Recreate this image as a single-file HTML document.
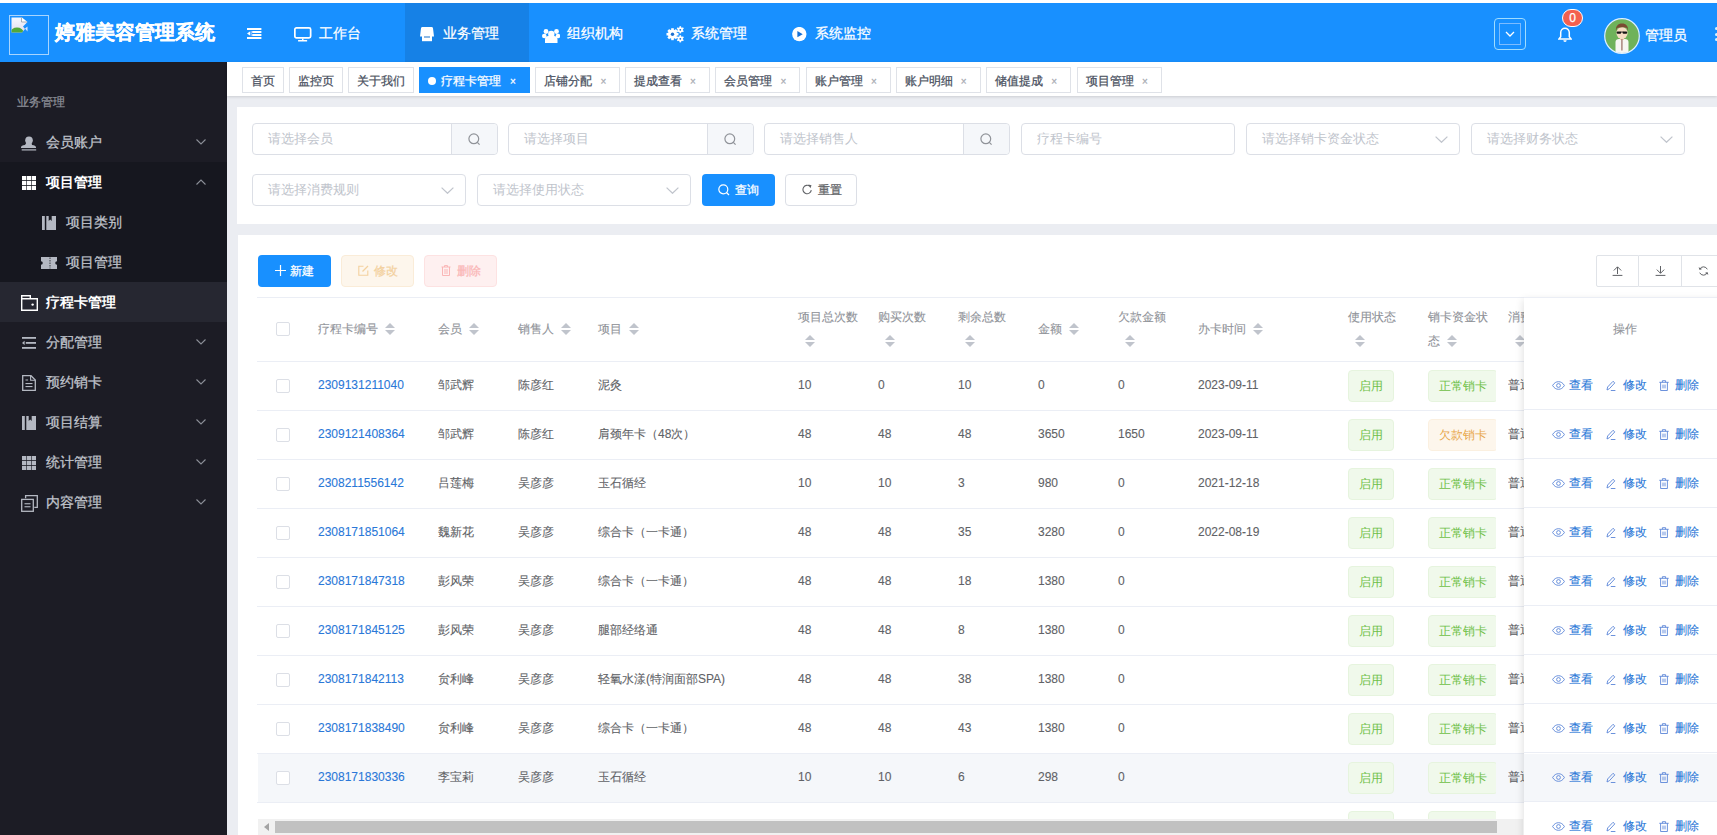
<!DOCTYPE html>
<html><head><meta charset="utf-8">
<style>
*{box-sizing:border-box;margin:0;padding:0}
html,body{width:1717px;height:835px;overflow:hidden;background:#fff;font-family:"Liberation Sans",sans-serif;}
body{-webkit-text-stroke:0.25px currentColor}
.abs{position:absolute}
#hdr{position:absolute;left:0;top:3px;width:1717px;height:59px;background:#1890ff;color:#fff}
#side{position:absolute;left:0;top:62px;width:227px;height:773px;background:#1c1c25}
#main{position:absolute;left:227px;top:62px;width:1490px;height:773px;background:#ebedf2}
#tags{position:absolute;left:0;top:0;width:1490px;height:34px;background:#fff;box-shadow:0 1px 3px 0 rgba(0,0,0,.12),0 0 3px 0 rgba(0,0,0,.04)}
.tag{position:absolute;top:5px;height:26px;border:1px solid #dfe2e8;background:#fff;color:#495060;font-size:12px;line-height:24px;padding-left:9px;white-space:nowrap}
.tag .x{position:absolute;font-size:11px;color:#999}
.nav{top:21px;font-size:14px;line-height:18px;color:#fff;white-space:nowrap}
.sm{font-size:14px;line-height:18px;color:#c0c4cc;white-space:nowrap}

.tag{position:absolute;top:5px;height:26px;border:1px solid #dfe2e8;background:#fff;color:#495060;font-size:12px;line-height:24px;white-space:nowrap}
.tag .tx{position:absolute;top:1px}
.tag .x{position:absolute;top:1.5px;width:16px;text-align:center;font-size:10px;color:#a8abb2}
.tag.tagon{background:#1890ff;border-color:#1890ff;color:#fff}
.tag.tagon .x{color:#fff}
.tag .dot{position:absolute;left:8px;top:9px;width:8px;height:8px;border-radius:50%;background:#fff}
.card{position:absolute;background:#fff}
.inp{-webkit-text-stroke:0;position:absolute;height:32px;border:1px solid #dcdfe6;border-radius:4px;background:#fff;font-size:13px;color:#c0c4cc;line-height:30px;padding-left:15px;white-space:nowrap}
.inp .ap{position:absolute;right:0;top:0;width:46px;height:30px;background:#f5f7fa;border-left:1px solid #dcdfe6;border-radius:0 4px 4px 0}
.inp .ap svg{position:absolute;left:16px;top:9px}
.inp .arr{position:absolute;right:11px;top:12px}
.btn{position:absolute;height:32px;border-radius:4px;font-size:12px;line-height:30px;white-space:nowrap}

.tb{position:absolute;white-space:nowrap}
.tb>svg,.abs>svg{display:block}
.th{-webkit-text-stroke:0.1px currentColor;position:absolute;font-size:12px;line-height:24px;color:#909399;white-space:nowrap}
.td{-webkit-text-stroke:0.1px currentColor;position:absolute;font-size:12px;line-height:16px;color:#606266;white-space:nowrap}
.lk{color:#2a78d8}
.cb{position:absolute;width:14px;height:14px;border:1px solid #dcdfe6;border-radius:2px;background:#fff}
.st{-webkit-text-stroke:0;position:absolute;height:32px;padding:0 10px;border:1px solid;border-radius:4px;font-size:12px;line-height:30px;white-space:nowrap}
.ok{background:#f0f9eb;border-color:#e6f4de;color:#6ec046}
.wn{background:#fdf6ec;border-color:#fbf0e0;color:#e8a74a}
.hl{position:absolute;height:1px;background:#ebeef5}
.act{-webkit-text-stroke:0.1px currentColor;position:absolute;font-size:12px;line-height:16px;color:#2a78d8;white-space:nowrap}
</style></head><body>
<div id="hdr">
  <div class="abs" style="left:9px;top:12px;width:40px;height:40px;border:1px solid #a8d5ff"></div>
  <svg class="abs" style="left:11px;top:14px" width="18" height="16" viewBox="0 0 18 16">
    <defs><clipPath id="bi"><path d="M.5 .5h10.5l5.5 4.5-4.5 4.5 2 2.5-3 3.5h-10.5z"/></clipPath>
    <linearGradient id="bg1" x1="0" y1="0" x2="0" y2="1"><stop offset="0" stop-color="#f4f8ff"/><stop offset="1" stop-color="#e2dcef"/></linearGradient></defs>
    <path d="M.5 .5h10.5l5.5 4.5-4.5 4.5 2 2.5-3 3.5h-10.5z" fill="url(#bg1)"/>
    <path d="M10.5 .5v4.5h5.5" fill="#fff" stroke="#8a8f99" stroke-width=".7"/>
    <g clip-path="url(#bi)"><ellipse cx="6" cy="15.5" rx="6.5" ry="5" fill="#52a83a"/></g>
    <path d="M14 11.5l2.5-2v5z" fill="#d8e6ff"/>
  </svg>
  <div class="abs" style="left:55px;top:16px;font-size:20px;font-weight:bold;line-height:26px;letter-spacing:0px">婷雅美容管理系统</div>
  <svg class="abs" style="left:247px;top:25px" width="15" height="11" viewBox="0 0 15 11">
    <rect x="0" y="0" width="14.4" height="2" fill="#fff"/>
    <rect x="5.2" y="3" width="9.2" height="2" fill="#fff"/>
    <rect x="5.2" y="6" width="9.2" height="2" fill="#fff"/>
    <rect x="0" y="9" width="14.4" height="2" fill="#fff"/>
    <path d="M0 5.5L3.3 3.2v4.6z" fill="#fff"/><rect x="4" y="3" width="0.6" height="5" fill="#c8d0ff"/>
  </svg>
  <div class="abs" style="left:405px;top:0;width:124px;height:59px;background:#1681e6"></div>
  <svg class="abs" style="left:294px;top:24px" width="18" height="15" viewBox="0 0 18 15">
    <rect x="0.85" y="0.85" width="15.8" height="10" rx="1.6" fill="none" stroke="#fff" stroke-width="1.7"/>
    <rect x="8" y="11.5" width="1.5" height="1.6" fill="#fff"/><rect x="4" y="13" width="9.2" height="1.5" rx=".5" fill="#fff"/>
  </svg>
  <div class="abs nav" style="left:319px">工作台</div>
  <svg class="abs" style="left:420px;top:24px" width="14" height="15" viewBox="0 0 14 15">
    <path d="M2.5 0h9a1.5 1.5 0 0 1 1.5 1.3l1 8.2h-14l1-8.2a1.5 1.5 0 0 1 1.5-1.3z" fill="#fff"/>
    <rect x="2" y="9" width="10" height="5.2" fill="#fff"/>
    <rect x="4" y="9.5" width="6" height="1" fill="#1a73c9"/>
  </svg>
  <div class="abs nav" style="left:443px">业务管理</div>
  <svg class="abs" style="left:542px;top:23px" width="18" height="17" viewBox="0 0 18 17">
    <g fill="#fff">
    <circle cx="4" cy="5.5" r="2.4"/><circle cx="14.5" cy="5.5" r="2.4"/>
    <circle cx="2.3" cy="10" r="2.3"/><circle cx="16" cy="10" r="2.3"/>
    <circle cx="9.3" cy="8" r="3.2"/>
    <path d="M3 17v-3.5a3.5 3.5 0 0 1 3.5-3.5h5.5a3.5 3.5 0 0 1 3.5 3.5v3.5z"/>
    </g>
  </svg>
  <div class="abs nav" style="left:567px">组织机构</div>
  <svg class="abs" style="left:666px;top:23px" width="19" height="17" viewBox="0 0 19 17">
    <g fill="#fff">
    <circle cx="6.5" cy="8.2" r="4.6"/>
    <g transform="translate(6.5 8.2)"><rect x="-1.3" y="-6" width="2.6" height="12"/><rect x="-1.3" y="-6" width="2.6" height="12" transform="rotate(45)"/><rect x="-1.3" y="-6" width="2.6" height="12" transform="rotate(90)"/><rect x="-1.3" y="-6" width="2.6" height="12" transform="rotate(135)"/></g>
    <circle cx="14.3" cy="3.8" r="2.6"/>
    <g transform="translate(14.3 3.8)"><rect x="-.8" y="-3.6" width="1.6" height="7.2"/><rect x="-.8" y="-3.6" width="1.6" height="7.2" transform="rotate(60)"/><rect x="-.8" y="-3.6" width="1.6" height="7.2" transform="rotate(120)"/></g>
    <circle cx="14.3" cy="12.8" r="2.6"/>
    <g transform="translate(14.3 12.8)"><rect x="-.8" y="-3.6" width="1.6" height="7.2"/><rect x="-.8" y="-3.6" width="1.6" height="7.2" transform="rotate(60)"/><rect x="-.8" y="-3.6" width="1.6" height="7.2" transform="rotate(120)"/></g>
    </g>
    <circle cx="6.5" cy="8.2" r="1.7" fill="#1b6fd0"/>
    <circle cx="14.3" cy="3.8" r=".9" fill="#1b6fd0"/>
    <circle cx="14.3" cy="12.8" r=".9" fill="#1b6fd0"/>
  </svg>
  <div class="abs nav" style="left:691px">系统管理</div>
  <svg class="abs" style="left:792px;top:24px" width="15" height="15" viewBox="0 0 15 15">
    <circle cx="7.3" cy="7.1" r="7.2" fill="#fff"/><path d="M5.4 4v6.3l5.3-3.15z" fill="#1670d6"/>
  </svg>
  <div class="abs nav" style="left:815px">系统监控</div>

  <div class="abs" style="left:1494px;top:15px;width:32px;height:32px;border:1.5px solid #9fdcff;border-radius:4px"></div>
  <div class="abs" style="left:1499px;top:20px;width:22px;height:22px;border:1px solid #7dbcff"></div>
  <svg class="abs" style="left:1505px;top:28px" width="10" height="6" viewBox="0 0 10 6"><path d="M1 1l4 4 4-4" fill="none" stroke="#fff" stroke-width="1.3"/></svg>
  <svg class="abs" style="left:1558px;top:24px" width="14" height="15" viewBox="0 0 14 15">
    <path d="M7 1.2a4.3 4.3 0 0 1 4.3 4.3v4.2l1.8 2.3H0.9l1.8-2.3V5.5A4.3 4.3 0 0 1 7 1.2z" fill="none" stroke="#fff" stroke-width="1.5"/>
    <path d="M5.3 13.2a1.7 1.7 0 0 0 3.4 0z" fill="#fff"/>
  </svg>
  <div class="abs" style="left:1562px;top:6px;width:21px;height:18px;border-radius:9px;background:#f3604f;border:1px solid #fff;color:#fff;font-size:12px;line-height:16px;text-align:center">0</div>
  <svg class="abs" style="left:1604px;top:15px" width="36" height="36" viewBox="0 0 36 36">
    <defs><clipPath id="av"><circle cx="18" cy="18" r="17"/></clipPath></defs>
    <g clip-path="url(#av)">
      <rect width="36" height="36" fill="#6fb25a"/>
      <path d="M11.5 36v-12c0-2 1.5-3 3.5-3h6c2 0 3.5 1 3.5 3v12z" fill="#f6f6f2"/>
      <rect x="16" y="19" width="4" height="3" fill="#f1d3b8"/>
      <rect x="17.2" y="21" width="1.4" height="11.5" fill="#a37d74"/>
      <ellipse cx="18" cy="15" rx="5.6" ry="6" fill="#f6dcc3"/>
      <path d="M12 13c-.5-5 2-7.5 6-7.5s6.5 2.5 6 7.5l-1-3c-2-1-7-1-10 0z" fill="#7a4a32"/>
      <rect x="12.6" y="13.4" width="4.6" height="2.4" rx="1" fill="#151515"/><rect x="18.6" y="13.4" width="4.6" height="2.4" rx="1" fill="#151515"/><rect x="16.5" y="13.6" width="3" height=".8" fill="#151515"/>
    </g>
    <circle cx="18" cy="18" r="17.3" fill="none" stroke="#dff0ff" stroke-width="1.2"/>
  </svg>
  <div class="abs nav" style="left:1645px;top:23px">管理员</div>
  <div class="abs" style="left:1715px;top:23.5px;width:3px;height:3px;background:#d8f4ff;border-radius:2px"></div><div class="abs" style="left:1715px;top:29.5px;width:3px;height:3px;background:#d8f4ff;border-radius:2px"></div><div class="abs" style="left:1715px;top:35px;width:3px;height:3px;background:#d8f4ff;border-radius:2px"></div>
  
</div>
<div id="side">
  <div class="abs" style="left:0;top:100px;width:227px;height:120px;background:#16171f"></div>
  <div class="abs" style="left:0;top:220px;width:227px;height:40px;background:#262731"></div>
  <div class="abs" style="left:17px;top:33px;font-size:12px;line-height:15px;color:#8c8f98">业务管理</div>
  <!-- 会员账户 y 60 -->
  <svg class="abs" style="left:21px;top:74px" width="16" height="15" viewBox="0 0 16 15">
    <circle cx="8" cy="4.3" r="3.8" fill="#b4b8c2"/><path d="M5.5 6.5h5l.5 2.5c2.5.3 4 .9 4 2.3v.8h-15v-.8c0-1.4 1.5-2 4-2.3z" fill="#b4b8c2"/>
    <rect x="0.7" y="13.3" width="14.5" height="1.2" fill="#b4b8c2"/>
  </svg>
  <div class="abs sm" style="left:46px;top:71px">会员账户</div>
  <svg class="abs chev" style="left:196px;top:77px" width="10" height="6" viewBox="0 0 10 6"><path d="M.5 .5l4.5 4.5 4.5-4.5" fill="none" stroke="#8c8f98" stroke-width="1.1"/></svg>
  <!-- 项目管理 y 100 -->
  <svg class="abs" style="left:22px;top:114px" width="14" height="14" viewBox="0 0 14 14">
    <g fill="#fff"><rect x="0" y="0" width="4.3" height="4" /><rect x="4.9" y="0" width="4.3" height="4"/><rect x="9.8" y="0" width="4.2" height="4"/>
    <rect x="0" y="4.8" width="4.3" height="4.2"/><rect x="4.9" y="4.8" width="4.3" height="4.2"/><rect x="9.8" y="4.8" width="4.2" height="4.2"/>
    <rect x="0" y="9.8" width="4.3" height="4.2"/><rect x="4.9" y="9.8" width="4.3" height="4.2"/><rect x="9.8" y="9.8" width="4.2" height="4.2"/></g>
  </svg>
  <div class="abs sm" style="left:46px;top:111px;color:#fff;font-weight:bold;-webkit-text-stroke:0">项目管理</div>
  <svg class="abs chev" style="left:196px;top:117px" width="10" height="6" viewBox="0 0 10 6"><path d="M.5 5.5l4.5-4.5 4.5 4.5" fill="none" stroke="#8c8f98" stroke-width="1.1"/></svg>
  <!-- 项目类别 y 140 -->
  <svg class="abs" style="left:42px;top:154px" width="14" height="14" viewBox="0 0 14 14">
    <rect x="0" y="0" width="2.8" height="14" fill="#b4b8c2"/>
    <path d="M4.3 0h2.4v5l1.5-1.4 1.5 1.4v-5h4.3v14h-9.7z" fill="#b4b8c2"/>
  </svg>
  <div class="abs sm" style="left:66px;top:151px">项目类别</div>
  <!-- 项目管理 sub y 180 -->
  <svg class="abs" style="left:41px;top:195px" width="16" height="12" viewBox="0 0 16 12">
    <path d="M0 0h16v4.2a1.8 1.8 0 0 0 0 3.6v4.2h-16v-4.2a1.8 1.8 0 0 0 0-3.6z" fill="#b4b8c2"/>
    <path d="M9 0.5v11" stroke="#181921" stroke-width=".8" stroke-dasharray="1.5 1"/>
  </svg>
  <div class="abs sm" style="left:66px;top:191px">项目管理</div>
  <!-- 疗程卡管理 y 220 -->
  <svg class="abs" style="left:21px;top:233px" width="17" height="16" viewBox="0 0 17 16">
    <path d="M.7 3.7h15.6v11.6h-15.6z" fill="none" stroke="#fff" stroke-width="1.4"/>
    <path d="M.7 3.7v-3h8.6v3" fill="none" stroke="#fff" stroke-width="1.4"/>
    <circle cx="11.6" cy="9.6" r="1.2" fill="#fff"/>
  </svg>
  <div class="abs sm" style="left:46px;top:231px;color:#fff;font-weight:bold;-webkit-text-stroke:0">疗程卡管理</div>
  <!-- 分配管理 y 260 -->
  <svg class="abs" style="left:22px;top:275px" width="14" height="12" viewBox="0 0 14 12">
    <rect x="0" y="0" width="14" height="1.8" fill="#b4b8c2"/><rect x="3.8" y="5" width="10.2" height="1.8" fill="#b4b8c2"/><rect x="0" y="10" width="14" height="1.8" fill="#b4b8c2"/>
    <path d="M0 5.9l2.6-2.2v4.4z" fill="#b4b8c2"/>
  </svg>
  <div class="abs sm" style="left:46px;top:271px">分配管理</div>
  <svg class="abs chev" style="left:196px;top:277px" width="10" height="6" viewBox="0 0 10 6"><path d="M.5 .5l4.5 4.5 4.5-4.5" fill="none" stroke="#8c8f98" stroke-width="1.1"/></svg>
  <!-- 预约销卡 y 300 -->
  <svg class="abs" style="left:22px;top:313px" width="14" height="16" viewBox="0 0 14 16">
    <path d="M.7 .7h8.3l4.3 4.3v10.3h-12.6z" fill="none" stroke="#b4b8c2" stroke-width="1.3"/>
    <path d="M8.6 .7v4.6h4.6" fill="none" stroke="#b4b8c2" stroke-width="1.1"/>
    <rect x="3.5" y="4.5" width="2.6" height="1" fill="#b4b8c2"/><rect x="3.5" y="8" width="7" height="1.1" fill="#b4b8c2"/><rect x="3.5" y="11" width="7" height="1.1" fill="#b4b8c2"/>
  </svg>
  <div class="abs sm" style="left:46px;top:311px">预约销卡</div>
  <svg class="abs chev" style="left:196px;top:317px" width="10" height="6" viewBox="0 0 10 6"><path d="M.5 .5l4.5 4.5 4.5-4.5" fill="none" stroke="#8c8f98" stroke-width="1.1"/></svg>
  <!-- 项目结算 y 340 -->
  <svg class="abs" style="left:22px;top:354px" width="14" height="14" viewBox="0 0 14 14">
    <rect x="0" y="0" width="2.8" height="14" fill="#b4b8c2"/>
    <path d="M4.3 0h2.4v5l1.5-1.4 1.5 1.4v-5h4.3v14h-9.7z" fill="#b4b8c2"/>
  </svg>
  <div class="abs sm" style="left:46px;top:351px">项目结算</div>
  <svg class="abs chev" style="left:196px;top:357px" width="10" height="6" viewBox="0 0 10 6"><path d="M.5 .5l4.5 4.5 4.5-4.5" fill="none" stroke="#8c8f98" stroke-width="1.1"/></svg>
  <!-- 统计管理 y 380 -->
  <svg class="abs" style="left:22px;top:394px" width="14" height="14" viewBox="0 0 14 14">
    <g fill="#b4b8c2"><rect x="0" y="0" width="4.3" height="4" /><rect x="4.9" y="0" width="4.3" height="4"/><rect x="9.8" y="0" width="4.2" height="4"/>
    <rect x="0" y="4.8" width="4.3" height="4.2"/><rect x="4.9" y="4.8" width="4.3" height="4.2"/><rect x="9.8" y="4.8" width="4.2" height="4.2"/>
    <rect x="0" y="9.8" width="4.3" height="4.2"/><rect x="4.9" y="9.8" width="4.3" height="4.2"/><rect x="9.8" y="9.8" width="4.2" height="4.2"/></g>
  </svg>
  <div class="abs sm" style="left:46px;top:391px">统计管理</div>
  <svg class="abs chev" style="left:196px;top:397px" width="10" height="6" viewBox="0 0 10 6"><path d="M.5 .5l4.5 4.5 4.5-4.5" fill="none" stroke="#8c8f98" stroke-width="1.1"/></svg>
  <!-- 内容管理 y 420 -->
  <svg class="abs" style="left:21px;top:433px" width="17" height="17" viewBox="0 0 17 17">
    <path d="M4.6 3.3v-2.6h11.7v11.7h-3" fill="none" stroke="#b4b8c2" stroke-width="1.3"/>
    <rect x=".7" y="4.4" width="11.6" height="11.9" fill="none" stroke="#b4b8c2" stroke-width="1.3"/>
    <rect x="3.5" y="8.2" width="6" height="1.1" fill="#b4b8c2"/><rect x="3.5" y="11.2" width="6" height="1.1" fill="#b4b8c2"/>
  </svg>
  <div class="abs sm" style="left:46px;top:431px">内容管理</div>
  <svg class="abs chev" style="left:196px;top:437px" width="10" height="6" viewBox="0 0 10 6"><path d="M.5 .5l4.5 4.5 4.5-4.5" fill="none" stroke="#8c8f98" stroke-width="1.1"/></svg>
</div>
<div id="main">
  <div id="tags">
<div class="tag" style="left:15px;width:42px"><span class="tx" style="left:8px">首页</span></div>
<div class="tag" style="left:62px;width:54px"><span class="tx" style="left:8px">监控页</span></div>
<div class="tag" style="left:121px;width:66px"><span class="tx" style="left:8px">关于我们</span></div>
<div class="tag tagon" style="left:192px;width:111px"><span class="dot"></span><span class="tx" style="left:21px">疗程卡管理</span><span class="x" style="left:85px">×</span></div>
<div class="tag" style="left:308.4px;width:85px"><span class="tx" style="left:8px">店铺分配</span><span class="x" style="left:59px">×</span></div>
<div class="tag" style="left:398px;width:85px"><span class="tx" style="left:8px">提成查看</span><span class="x" style="left:59px">×</span></div>
<div class="tag" style="left:488px;width:85.3px"><span class="tx" style="left:8px">会员管理</span><span class="x" style="left:59.3px">×</span></div>
<div class="tag" style="left:579px;width:85px"><span class="tx" style="left:8px">账户管理</span><span class="x" style="left:59px">×</span></div>
<div class="tag" style="left:669px;width:84.6px"><span class="tx" style="left:8px">账户明细</span><span class="x" style="left:58.599999999999994px">×</span></div>
<div class="tag" style="left:759.2px;width:85px"><span class="tx" style="left:8px">储值提成</span><span class="x" style="left:59px">×</span></div>
<div class="tag" style="left:850.4000000000001px;width:84.5px"><span class="tx" style="left:8px">项目管理</span><span class="x" style="left:58.5px">×</span></div>
</div>
<div class="card" style="left:10px;top:44.6px;width:1500px;height:117.4px"></div>
<div class="inp" style="left:25px;top:61px;width:245.5px">请选择会员<div class="ap"><svg width="13" height="13" viewBox="0 0 13 13"><circle cx="5.8" cy="5.8" r="4.9" fill="none" stroke="#909399" stroke-width="1.2"/><path d="M9.3 9.3l2.3 2.3" stroke="#909399" stroke-width="1.2"/></svg></div></div>
<div class="inp" style="left:281px;top:61px;width:245.5px">请选择项目<div class="ap"><svg width="13" height="13" viewBox="0 0 13 13"><circle cx="5.8" cy="5.8" r="4.9" fill="none" stroke="#909399" stroke-width="1.2"/><path d="M9.3 9.3l2.3 2.3" stroke="#909399" stroke-width="1.2"/></svg></div></div>
<div class="inp" style="left:537px;top:61px;width:245.5px">请选择销售人<div class="ap"><svg width="13" height="13" viewBox="0 0 13 13"><circle cx="5.8" cy="5.8" r="4.9" fill="none" stroke="#909399" stroke-width="1.2"/><path d="M9.3 9.3l2.3 2.3" stroke="#909399" stroke-width="1.2"/></svg></div></div>
<div class="inp" style="left:793.5px;top:61px;width:214.3px">疗程卡编号</div>
<div class="inp" style="left:1018.5999999999999px;top:61px;width:214.3px">请选择销卡资金状态<svg class="arr" width="13" height="7" viewBox="0 0 13 7"><path d="M.6 .6l5.9 5.7 5.9-5.7" fill="none" stroke="#c0c4cc" stroke-width="1.2"/></svg></div>
<div class="inp" style="left:1243.5px;top:61px;width:214.3px">请选择财务状态<svg class="arr" width="13" height="7" viewBox="0 0 13 7"><path d="M.6 .6l5.9 5.7 5.9-5.7" fill="none" stroke="#c0c4cc" stroke-width="1.2"/></svg></div>
<div class="inp" style="left:25px;top:112px;width:214.3px">请选择消费规则<svg class="arr" width="13" height="7" viewBox="0 0 13 7"><path d="M.6 .6l5.9 5.7 5.9-5.7" fill="none" stroke="#c0c4cc" stroke-width="1.2"/></svg></div>
<div class="inp" style="left:250px;top:112px;width:214.3px">请选择使用状态<svg class="arr" width="13" height="7" viewBox="0 0 13 7"><path d="M.6 .6l5.9 5.7 5.9-5.7" fill="none" stroke="#c0c4cc" stroke-width="1.2"/></svg></div>
<div class="btn" style="left:475px;top:112px;width:72.6px;background:#1890ff;color:#fff">
<svg class="abs" style="left:16px;top:10px" width="12" height="12" viewBox="0 0 12 12"><circle cx="5.3" cy="5.3" r="4.5" fill="none" stroke="#fff" stroke-width="1.2"/><path d="M8.5 8.5l2.5 2.5" stroke="#fff" stroke-width="1.2"/></svg>
<span class="abs" style="left:33px;top:1px">查询</span></div>
<div class="btn" style="left:558px;top:112px;width:72px;background:#fff;border:1px solid #dcdfe6;color:#606266">
<svg class="abs" style="left:16px;top:9px" width="11" height="11" viewBox="0 0 11 11"><path d="M9.3 6.2A4.2 4.2 0 1 1 7.8 2.2" fill="none" stroke="#606266" stroke-width="1.1"/><path d="M6.3 .4l3.2.9-1.1 3z" fill="#606266"/></svg>
<span class="abs" style="left:32px;top:0px">重置</span></div>
<!--TABLE-->
<div class="card" style="left:11px;top:173px;width:1500px;height:700px"></div>
<div class="btn" style="left:31.30000000000001px;top:193.3px;width:72.5px;background:#1890ff;color:#fff"><svg class="abs" style="left:17px;top:10px" width="11" height="11" viewBox="0 0 11 11"><path d="M5.5 0v11M0 5.5h11" stroke="#fff" stroke-width="1.2"/></svg><span class="abs" style="left:32px;top:1px">新建</span></div>
<div class="btn" style="left:114.39999999999998px;top:193.3px;width:72.2px;background:#fdf6ec;border:1px solid #faecd8;color:#f3d19e"><svg class="abs" style="left:16px;top:9px" width="11" height="11" viewBox="0 0 11 11"><path d="M5.5 1.2H.8v9h9V5.5" fill="none" stroke="#f3d19e" stroke-width="1.1"/><path d="M4.5 6.5L10 1" stroke="#f3d19e" stroke-width="1.2"/></svg><span class="abs" style="left:32px;top:0px">修改</span></div>
<div class="btn" style="left:197.2px;top:193.3px;width:72.8px;background:#fef0f0;border:1px solid #fde2e2;color:#fab6b6"><svg class="abs" style="left:16px;top:9px" width="10" height="11" viewBox="0 0 10 11"><path d="M.5 2h9M3.5 2V.6h3V2M1.5 2v8.5h7V2M4 4v5M6 4v5" fill="none" stroke="#fab6b6" stroke-width="1"/></svg><span class="abs" style="left:32px;top:0px">删除</span></div>
<div class="abs" style="left:1368.8px;top:193.4px;width:43.7px;height:31.5px;border:1px solid #e0e3e8;border-radius:2px 0 0 2px;background:#fff"></div>
<div class="abs" style="left:1411.8px;top:193.4px;width:43.7px;height:31.5px;border:1px solid #e0e3e8;border-left:none;background:#fff"></div>
<div class="abs" style="left:1454.8px;top:193.4px;width:43px;height:31.5px;border:1px solid #e0e3e8;border-left:none;background:#fff"></div>
<div class="tb" style="left:1384.5px;top:203.5px"><svg width="11" height="10" viewBox="0 0 11 10"><path d="M5.5 8V1M1.8 4.5L5.5 .8l3.7 3.7" fill="none" stroke="#606266" stroke-width="1"/><path d="M.6 9.4h9.8" stroke="#606266" stroke-width="1"/></svg></div>
<div class="tb" style="left:1427.5px;top:203.5px"><svg width="11" height="10" viewBox="0 0 11 10"><path d="M5.5 0v7.2M1.8 3.6l3.7 3.7 3.7-3.7" fill="none" stroke="#606266" stroke-width="1"/><path d="M.6 9.4h9.8" stroke="#606266" stroke-width="1"/></svg></div>
<div class="tb" style="left:1471px;top:203.5px"><svg width="11" height="10" viewBox="0 0 11 10"><path d="M9.3 3.3A4.2 4.2 0 0 0 1.8 3M1.7 6.7a4.2 4.2 0 0 0 7.5.3" fill="none" stroke="#606266" stroke-width="1"/><path d="M.6 1.2l1 2.9 2.6-1.2zM10.4 8.8l-1-2.9-2.6 1.2z" fill="#606266"/></svg></div>
<div class="hl" style="left:30px;top:235px;width:1470px"></div>
<div class="cb" style="left:49px;top:260px"></div>
<div class="th" style="left:91px;top:255px">疗程卡编号</div>
<div class="tb" style="left:158px;top:261px;width:10px;height:12px"><svg width="10" height="12" viewBox="0 0 10 12"><path d="M5 0L10 5H0z" fill="#c0c4cc"/><path d="M5 12L10 7H0z" fill="#c0c4cc"/></svg></div>
<div class="th" style="left:211px;top:255px">会员</div>
<div class="tb" style="left:242px;top:261px;width:10px;height:12px"><svg width="10" height="12" viewBox="0 0 10 12"><path d="M5 0L10 5H0z" fill="#c0c4cc"/><path d="M5 12L10 7H0z" fill="#c0c4cc"/></svg></div>
<div class="th" style="left:291px;top:255px">销售人</div>
<div class="tb" style="left:334px;top:261px;width:10px;height:12px"><svg width="10" height="12" viewBox="0 0 10 12"><path d="M5 0L10 5H0z" fill="#c0c4cc"/><path d="M5 12L10 7H0z" fill="#c0c4cc"/></svg></div>
<div class="th" style="left:371px;top:255px">项目</div>
<div class="tb" style="left:402px;top:261px;width:10px;height:12px"><svg width="10" height="12" viewBox="0 0 10 12"><path d="M5 0L10 5H0z" fill="#c0c4cc"/><path d="M5 12L10 7H0z" fill="#c0c4cc"/></svg></div>
<div class="th" style="left:811px;top:255px">金额</div>
<div class="tb" style="left:842px;top:261px;width:10px;height:12px"><svg width="10" height="12" viewBox="0 0 10 12"><path d="M5 0L10 5H0z" fill="#c0c4cc"/><path d="M5 12L10 7H0z" fill="#c0c4cc"/></svg></div>
<div class="th" style="left:971px;top:255px">办卡时间</div>
<div class="tb" style="left:1026px;top:261px;width:10px;height:12px"><svg width="10" height="12" viewBox="0 0 10 12"><path d="M5 0L10 5H0z" fill="#c0c4cc"/><path d="M5 12L10 7H0z" fill="#c0c4cc"/></svg></div>
<div class="th" style="left:571px;top:242.5px">项目总次数</div>
<div class="tb" style="left:577.8px;top:273px;width:10px;height:12px"><svg width="10" height="12" viewBox="0 0 10 12"><path d="M5 0L10 5H0z" fill="#c0c4cc"/><path d="M5 12L10 7H0z" fill="#c0c4cc"/></svg></div>
<div class="th" style="left:651px;top:242.5px">购买次数</div>
<div class="tb" style="left:657.8px;top:273px;width:10px;height:12px"><svg width="10" height="12" viewBox="0 0 10 12"><path d="M5 0L10 5H0z" fill="#c0c4cc"/><path d="M5 12L10 7H0z" fill="#c0c4cc"/></svg></div>
<div class="th" style="left:731px;top:242.5px">剩余总数</div>
<div class="tb" style="left:737.8px;top:273px;width:10px;height:12px"><svg width="10" height="12" viewBox="0 0 10 12"><path d="M5 0L10 5H0z" fill="#c0c4cc"/><path d="M5 12L10 7H0z" fill="#c0c4cc"/></svg></div>
<div class="th" style="left:891px;top:242.5px">欠款金额</div>
<div class="tb" style="left:897.8px;top:273px;width:10px;height:12px"><svg width="10" height="12" viewBox="0 0 10 12"><path d="M5 0L10 5H0z" fill="#c0c4cc"/><path d="M5 12L10 7H0z" fill="#c0c4cc"/></svg></div>
<div class="th" style="left:1121px;top:242.5px">使用状态</div>
<div class="tb" style="left:1127.8px;top:273px;width:10px;height:12px"><svg width="10" height="12" viewBox="0 0 10 12"><path d="M5 0L10 5H0z" fill="#c0c4cc"/><path d="M5 12L10 7H0z" fill="#c0c4cc"/></svg></div>
<div class="th" style="left:1201px;top:242.5px">销卡资金状</div>
<div class="th" style="left:1201px;top:266.5px">态</div>
<div class="tb" style="left:1220px;top:273px;width:10px;height:12px"><svg width="10" height="12" viewBox="0 0 10 12"><path d="M5 0L10 5H0z" fill="#c0c4cc"/><path d="M5 12L10 7H0z" fill="#c0c4cc"/></svg></div>
<div class="tb" style="left:1271px;top:235px;width:26px;height:64px;overflow:hidden"><div class="th" style="left:10px;top:7.5px">消费规则</div><div class="tb" style="left:16.5px;top:38px"><svg width="10" height="12" viewBox="0 0 10 12"><path d="M5 0L10 5H0z" fill="#c0c4cc"/><path d="M5 12L10 7H0z" fill="#c0c4cc"/></svg></div></div>
<div class="hl" style="left:30px;top:299px;width:1470px"></div>
<div class="hl" style="left:30px;top:348px;width:1470px"></div>
<div class="cb" style="left:49px;top:316.5px"></div>
<div class="td lk" style="left:91px;top:314.5px">2309131211040</div>
<div class="td" style="left:211px;top:314.5px">邹武辉</div>
<div class="td" style="left:291px;top:314.5px">陈彦红</div>
<div class="td" style="left:371px;top:314.5px">泥灸</div>
<div class="td" style="left:571px;top:314.5px">10</div>
<div class="td" style="left:651px;top:314.5px">0</div>
<div class="td" style="left:731px;top:314.5px">10</div>
<div class="td" style="left:811px;top:314.5px">0</div>
<div class="td" style="left:891px;top:314.5px">0</div>
<div class="td" style="left:971px;top:314.5px">2023-09-11</div>
<div class="st ok" style="left:1121px;top:307.5px">启用</div>
<div class="tb" style="left:1201px;top:307.5px;width:68px;height:32px;overflow:hidden"><div class="st ok" style="left:0;top:0">正常销卡</div></div>
<div class="tb" style="left:1281px;top:314.5px;width:16px;height:18px;overflow:hidden"><div class="td" style="left:0;top:0">普通</div></div>
<div class="hl" style="left:30px;top:397px;width:1470px"></div>
<div class="cb" style="left:49px;top:365.5px"></div>
<div class="td lk" style="left:91px;top:363.5px">2309121408364</div>
<div class="td" style="left:211px;top:363.5px">邹武辉</div>
<div class="td" style="left:291px;top:363.5px">陈彦红</div>
<div class="td" style="left:371px;top:363.5px">肩颈年卡（48次）</div>
<div class="td" style="left:571px;top:363.5px">48</div>
<div class="td" style="left:651px;top:363.5px">48</div>
<div class="td" style="left:731px;top:363.5px">48</div>
<div class="td" style="left:811px;top:363.5px">3650</div>
<div class="td" style="left:891px;top:363.5px">1650</div>
<div class="td" style="left:971px;top:363.5px">2023-09-11</div>
<div class="st ok" style="left:1121px;top:356.5px">启用</div>
<div class="tb" style="left:1201px;top:356.5px;width:68px;height:32px;overflow:hidden"><div class="st wn" style="left:0;top:0">欠款销卡</div></div>
<div class="tb" style="left:1281px;top:363.5px;width:16px;height:18px;overflow:hidden"><div class="td" style="left:0;top:0">普通</div></div>
<div class="hl" style="left:30px;top:446px;width:1470px"></div>
<div class="cb" style="left:49px;top:414.5px"></div>
<div class="td lk" style="left:91px;top:412.5px">2308211556142</div>
<div class="td" style="left:211px;top:412.5px">吕莲梅</div>
<div class="td" style="left:291px;top:412.5px">吴彦彦</div>
<div class="td" style="left:371px;top:412.5px">玉石循经</div>
<div class="td" style="left:571px;top:412.5px">10</div>
<div class="td" style="left:651px;top:412.5px">10</div>
<div class="td" style="left:731px;top:412.5px">3</div>
<div class="td" style="left:811px;top:412.5px">980</div>
<div class="td" style="left:891px;top:412.5px">0</div>
<div class="td" style="left:971px;top:412.5px">2021-12-18</div>
<div class="st ok" style="left:1121px;top:405.5px">启用</div>
<div class="tb" style="left:1201px;top:405.5px;width:68px;height:32px;overflow:hidden"><div class="st ok" style="left:0;top:0">正常销卡</div></div>
<div class="tb" style="left:1281px;top:412.5px;width:16px;height:18px;overflow:hidden"><div class="td" style="left:0;top:0">普通</div></div>
<div class="hl" style="left:30px;top:495px;width:1470px"></div>
<div class="cb" style="left:49px;top:463.5px"></div>
<div class="td lk" style="left:91px;top:461.5px">2308171851064</div>
<div class="td" style="left:211px;top:461.5px">魏新花</div>
<div class="td" style="left:291px;top:461.5px">吴彦彦</div>
<div class="td" style="left:371px;top:461.5px">综合卡（一卡通）</div>
<div class="td" style="left:571px;top:461.5px">48</div>
<div class="td" style="left:651px;top:461.5px">48</div>
<div class="td" style="left:731px;top:461.5px">35</div>
<div class="td" style="left:811px;top:461.5px">3280</div>
<div class="td" style="left:891px;top:461.5px">0</div>
<div class="td" style="left:971px;top:461.5px">2022-08-19</div>
<div class="st ok" style="left:1121px;top:454.5px">启用</div>
<div class="tb" style="left:1201px;top:454.5px;width:68px;height:32px;overflow:hidden"><div class="st ok" style="left:0;top:0">正常销卡</div></div>
<div class="tb" style="left:1281px;top:461.5px;width:16px;height:18px;overflow:hidden"><div class="td" style="left:0;top:0">普通</div></div>
<div class="hl" style="left:30px;top:544px;width:1470px"></div>
<div class="cb" style="left:49px;top:512.5px"></div>
<div class="td lk" style="left:91px;top:510.5px">2308171847318</div>
<div class="td" style="left:211px;top:510.5px">彭风荣</div>
<div class="td" style="left:291px;top:510.5px">吴彦彦</div>
<div class="td" style="left:371px;top:510.5px">综合卡（一卡通）</div>
<div class="td" style="left:571px;top:510.5px">48</div>
<div class="td" style="left:651px;top:510.5px">48</div>
<div class="td" style="left:731px;top:510.5px">18</div>
<div class="td" style="left:811px;top:510.5px">1380</div>
<div class="td" style="left:891px;top:510.5px">0</div>
<div class="st ok" style="left:1121px;top:503.5px">启用</div>
<div class="tb" style="left:1201px;top:503.5px;width:68px;height:32px;overflow:hidden"><div class="st ok" style="left:0;top:0">正常销卡</div></div>
<div class="tb" style="left:1281px;top:510.5px;width:16px;height:18px;overflow:hidden"><div class="td" style="left:0;top:0">普通</div></div>
<div class="hl" style="left:30px;top:593px;width:1470px"></div>
<div class="cb" style="left:49px;top:561.5px"></div>
<div class="td lk" style="left:91px;top:559.5px">2308171845125</div>
<div class="td" style="left:211px;top:559.5px">彭风荣</div>
<div class="td" style="left:291px;top:559.5px">吴彦彦</div>
<div class="td" style="left:371px;top:559.5px">腿部经络通</div>
<div class="td" style="left:571px;top:559.5px">48</div>
<div class="td" style="left:651px;top:559.5px">48</div>
<div class="td" style="left:731px;top:559.5px">8</div>
<div class="td" style="left:811px;top:559.5px">1380</div>
<div class="td" style="left:891px;top:559.5px">0</div>
<div class="st ok" style="left:1121px;top:552.5px">启用</div>
<div class="tb" style="left:1201px;top:552.5px;width:68px;height:32px;overflow:hidden"><div class="st ok" style="left:0;top:0">正常销卡</div></div>
<div class="tb" style="left:1281px;top:559.5px;width:16px;height:18px;overflow:hidden"><div class="td" style="left:0;top:0">普通</div></div>
<div class="hl" style="left:30px;top:642px;width:1470px"></div>
<div class="cb" style="left:49px;top:610.5px"></div>
<div class="td lk" style="left:91px;top:608.5px">2308171842113</div>
<div class="td" style="left:211px;top:608.5px">贠利峰</div>
<div class="td" style="left:291px;top:608.5px">吴彦彦</div>
<div class="td" style="left:371px;top:608.5px">轻氧水漾(特润面部SPA)</div>
<div class="td" style="left:571px;top:608.5px">48</div>
<div class="td" style="left:651px;top:608.5px">48</div>
<div class="td" style="left:731px;top:608.5px">38</div>
<div class="td" style="left:811px;top:608.5px">1380</div>
<div class="td" style="left:891px;top:608.5px">0</div>
<div class="st ok" style="left:1121px;top:601.5px">启用</div>
<div class="tb" style="left:1201px;top:601.5px;width:68px;height:32px;overflow:hidden"><div class="st ok" style="left:0;top:0">正常销卡</div></div>
<div class="tb" style="left:1281px;top:608.5px;width:16px;height:18px;overflow:hidden"><div class="td" style="left:0;top:0">普通</div></div>
<div class="hl" style="left:30px;top:691px;width:1470px"></div>
<div class="cb" style="left:49px;top:659.5px"></div>
<div class="td lk" style="left:91px;top:657.5px">2308171838490</div>
<div class="td" style="left:211px;top:657.5px">贠利峰</div>
<div class="td" style="left:291px;top:657.5px">吴彦彦</div>
<div class="td" style="left:371px;top:657.5px">综合卡（一卡通）</div>
<div class="td" style="left:571px;top:657.5px">48</div>
<div class="td" style="left:651px;top:657.5px">48</div>
<div class="td" style="left:731px;top:657.5px">43</div>
<div class="td" style="left:811px;top:657.5px">1380</div>
<div class="td" style="left:891px;top:657.5px">0</div>
<div class="st ok" style="left:1121px;top:650.5px">启用</div>
<div class="tb" style="left:1201px;top:650.5px;width:68px;height:32px;overflow:hidden"><div class="st ok" style="left:0;top:0">正常销卡</div></div>
<div class="tb" style="left:1281px;top:657.5px;width:16px;height:18px;overflow:hidden"><div class="td" style="left:0;top:0">普通</div></div>
<div class="abs" style="left:31px;top:692px;width:1470px;height:48px;background:#f5f7fa"></div>
<div class="hl" style="left:30px;top:740px;width:1470px"></div>
<div class="cb" style="left:49px;top:708.5px"></div>
<div class="td lk" style="left:91px;top:706.5px">2308171830336</div>
<div class="td" style="left:211px;top:706.5px">李宝莉</div>
<div class="td" style="left:291px;top:706.5px">吴彦彦</div>
<div class="td" style="left:371px;top:706.5px">玉石循经</div>
<div class="td" style="left:571px;top:706.5px">10</div>
<div class="td" style="left:651px;top:706.5px">10</div>
<div class="td" style="left:731px;top:706.5px">6</div>
<div class="td" style="left:811px;top:706.5px">298</div>
<div class="td" style="left:891px;top:706.5px">0</div>
<div class="st ok" style="left:1121px;top:699.5px">启用</div>
<div class="tb" style="left:1201px;top:699.5px;width:68px;height:32px;overflow:hidden"><div class="st ok" style="left:0;top:0">正常销卡</div></div>
<div class="tb" style="left:1281px;top:706.5px;width:16px;height:18px;overflow:hidden"><div class="td" style="left:0;top:0">普通</div></div>
<div class="hl" style="left:30px;top:789px;width:1470px"></div>
<div class="cb" style="left:49px;top:757.5px"></div>
<div class="st ok" style="left:1121px;top:748.5px">启用</div>
<div class="tb" style="left:1201px;top:748.5px;width:68px;height:32px;overflow:hidden"><div class="st ok" style="left:0;top:0">正常销卡</div></div>
<div class="abs" style="left:31px;top:757px;width:1265px;height:16px;background:#f1f1f1"></div>
<div class="abs" style="left:48px;top:759px;width:1222px;height:12px;background:#c1c1c1"></div>
<svg class="abs" style="left:37px;top:761px" width="5" height="8" viewBox="0 0 5 8"><path d="M0 4L5 0v8z" fill="#a3a3a3"/></svg>
<div class="abs" style="left:1297.4px;top:235px;width:210px;height:560px;background:#fff;box-shadow:-4px 0 8px -3px rgba(0,0,0,.12)"></div>
<div class="hl" style="left:1297.4px;top:235px;width:210px"></div>
<div class="th" style="left:1386px;top:255px">操作</div>
<div class="hl" style="left:1297.4px;top:347px;width:210px"></div>
<div class="tb" style="left:1325px;top:318.5px"><svg width="13" height="9" viewBox="0 0 13 9"><path d="M.6 4.5C2.2 1.8 4.2.7 6.5.7s4.3 1.1 5.9 3.8C10.8 7.2 8.8 8.3 6.5 8.3S2.2 7.2.6 4.5z" fill="none" stroke="#5b86d8" stroke-width=".9"/><circle cx="6.5" cy="4.5" r="1.9" fill="none" stroke="#5b86d8" stroke-width=".9"/></svg></div>
<div class="act" style="left:1342px;top:314.5px">查看</div>
<div class="tb" style="left:1379px;top:317.5px"><svg width="10" height="11" viewBox="0 0 10 11"><path d="M1 10l.6-3L7 1.3l1.8 1.6L3.4 8.7z" fill="none" stroke="#5b86d8" stroke-width=".9"/><path d="M4.8 10.5h4.6" stroke="#5b86d8" stroke-width=".9"/></svg></div>
<div class="act" style="left:1395.5px;top:314.5px">修改</div>
<div class="tb" style="left:1432px;top:317.5px"><svg width="10" height="11" viewBox="0 0 10 11"><path d="M.3 2.3h9.4M3.4 2.3V.7h3.2v1.6M1.6 2.3v8.2h6.8V2.3M4 4.6v3.8M6 4.6v3.8" fill="none" stroke="#5b86d8" stroke-width=".9"/></svg></div>
<div class="act" style="left:1448px;top:314.5px">删除</div>
<div class="hl" style="left:1297.4px;top:396px;width:210px"></div>
<div class="tb" style="left:1325px;top:367.5px"><svg width="13" height="9" viewBox="0 0 13 9"><path d="M.6 4.5C2.2 1.8 4.2.7 6.5.7s4.3 1.1 5.9 3.8C10.8 7.2 8.8 8.3 6.5 8.3S2.2 7.2.6 4.5z" fill="none" stroke="#5b86d8" stroke-width=".9"/><circle cx="6.5" cy="4.5" r="1.9" fill="none" stroke="#5b86d8" stroke-width=".9"/></svg></div>
<div class="act" style="left:1342px;top:363.5px">查看</div>
<div class="tb" style="left:1379px;top:366.5px"><svg width="10" height="11" viewBox="0 0 10 11"><path d="M1 10l.6-3L7 1.3l1.8 1.6L3.4 8.7z" fill="none" stroke="#5b86d8" stroke-width=".9"/><path d="M4.8 10.5h4.6" stroke="#5b86d8" stroke-width=".9"/></svg></div>
<div class="act" style="left:1395.5px;top:363.5px">修改</div>
<div class="tb" style="left:1432px;top:366.5px"><svg width="10" height="11" viewBox="0 0 10 11"><path d="M.3 2.3h9.4M3.4 2.3V.7h3.2v1.6M1.6 2.3v8.2h6.8V2.3M4 4.6v3.8M6 4.6v3.8" fill="none" stroke="#5b86d8" stroke-width=".9"/></svg></div>
<div class="act" style="left:1448px;top:363.5px">删除</div>
<div class="hl" style="left:1297.4px;top:445px;width:210px"></div>
<div class="tb" style="left:1325px;top:416.5px"><svg width="13" height="9" viewBox="0 0 13 9"><path d="M.6 4.5C2.2 1.8 4.2.7 6.5.7s4.3 1.1 5.9 3.8C10.8 7.2 8.8 8.3 6.5 8.3S2.2 7.2.6 4.5z" fill="none" stroke="#5b86d8" stroke-width=".9"/><circle cx="6.5" cy="4.5" r="1.9" fill="none" stroke="#5b86d8" stroke-width=".9"/></svg></div>
<div class="act" style="left:1342px;top:412.5px">查看</div>
<div class="tb" style="left:1379px;top:415.5px"><svg width="10" height="11" viewBox="0 0 10 11"><path d="M1 10l.6-3L7 1.3l1.8 1.6L3.4 8.7z" fill="none" stroke="#5b86d8" stroke-width=".9"/><path d="M4.8 10.5h4.6" stroke="#5b86d8" stroke-width=".9"/></svg></div>
<div class="act" style="left:1395.5px;top:412.5px">修改</div>
<div class="tb" style="left:1432px;top:415.5px"><svg width="10" height="11" viewBox="0 0 10 11"><path d="M.3 2.3h9.4M3.4 2.3V.7h3.2v1.6M1.6 2.3v8.2h6.8V2.3M4 4.6v3.8M6 4.6v3.8" fill="none" stroke="#5b86d8" stroke-width=".9"/></svg></div>
<div class="act" style="left:1448px;top:412.5px">删除</div>
<div class="hl" style="left:1297.4px;top:494px;width:210px"></div>
<div class="tb" style="left:1325px;top:465.5px"><svg width="13" height="9" viewBox="0 0 13 9"><path d="M.6 4.5C2.2 1.8 4.2.7 6.5.7s4.3 1.1 5.9 3.8C10.8 7.2 8.8 8.3 6.5 8.3S2.2 7.2.6 4.5z" fill="none" stroke="#5b86d8" stroke-width=".9"/><circle cx="6.5" cy="4.5" r="1.9" fill="none" stroke="#5b86d8" stroke-width=".9"/></svg></div>
<div class="act" style="left:1342px;top:461.5px">查看</div>
<div class="tb" style="left:1379px;top:464.5px"><svg width="10" height="11" viewBox="0 0 10 11"><path d="M1 10l.6-3L7 1.3l1.8 1.6L3.4 8.7z" fill="none" stroke="#5b86d8" stroke-width=".9"/><path d="M4.8 10.5h4.6" stroke="#5b86d8" stroke-width=".9"/></svg></div>
<div class="act" style="left:1395.5px;top:461.5px">修改</div>
<div class="tb" style="left:1432px;top:464.5px"><svg width="10" height="11" viewBox="0 0 10 11"><path d="M.3 2.3h9.4M3.4 2.3V.7h3.2v1.6M1.6 2.3v8.2h6.8V2.3M4 4.6v3.8M6 4.6v3.8" fill="none" stroke="#5b86d8" stroke-width=".9"/></svg></div>
<div class="act" style="left:1448px;top:461.5px">删除</div>
<div class="hl" style="left:1297.4px;top:543px;width:210px"></div>
<div class="tb" style="left:1325px;top:514.5px"><svg width="13" height="9" viewBox="0 0 13 9"><path d="M.6 4.5C2.2 1.8 4.2.7 6.5.7s4.3 1.1 5.9 3.8C10.8 7.2 8.8 8.3 6.5 8.3S2.2 7.2.6 4.5z" fill="none" stroke="#5b86d8" stroke-width=".9"/><circle cx="6.5" cy="4.5" r="1.9" fill="none" stroke="#5b86d8" stroke-width=".9"/></svg></div>
<div class="act" style="left:1342px;top:510.5px">查看</div>
<div class="tb" style="left:1379px;top:513.5px"><svg width="10" height="11" viewBox="0 0 10 11"><path d="M1 10l.6-3L7 1.3l1.8 1.6L3.4 8.7z" fill="none" stroke="#5b86d8" stroke-width=".9"/><path d="M4.8 10.5h4.6" stroke="#5b86d8" stroke-width=".9"/></svg></div>
<div class="act" style="left:1395.5px;top:510.5px">修改</div>
<div class="tb" style="left:1432px;top:513.5px"><svg width="10" height="11" viewBox="0 0 10 11"><path d="M.3 2.3h9.4M3.4 2.3V.7h3.2v1.6M1.6 2.3v8.2h6.8V2.3M4 4.6v3.8M6 4.6v3.8" fill="none" stroke="#5b86d8" stroke-width=".9"/></svg></div>
<div class="act" style="left:1448px;top:510.5px">删除</div>
<div class="hl" style="left:1297.4px;top:592px;width:210px"></div>
<div class="tb" style="left:1325px;top:563.5px"><svg width="13" height="9" viewBox="0 0 13 9"><path d="M.6 4.5C2.2 1.8 4.2.7 6.5.7s4.3 1.1 5.9 3.8C10.8 7.2 8.8 8.3 6.5 8.3S2.2 7.2.6 4.5z" fill="none" stroke="#5b86d8" stroke-width=".9"/><circle cx="6.5" cy="4.5" r="1.9" fill="none" stroke="#5b86d8" stroke-width=".9"/></svg></div>
<div class="act" style="left:1342px;top:559.5px">查看</div>
<div class="tb" style="left:1379px;top:562.5px"><svg width="10" height="11" viewBox="0 0 10 11"><path d="M1 10l.6-3L7 1.3l1.8 1.6L3.4 8.7z" fill="none" stroke="#5b86d8" stroke-width=".9"/><path d="M4.8 10.5h4.6" stroke="#5b86d8" stroke-width=".9"/></svg></div>
<div class="act" style="left:1395.5px;top:559.5px">修改</div>
<div class="tb" style="left:1432px;top:562.5px"><svg width="10" height="11" viewBox="0 0 10 11"><path d="M.3 2.3h9.4M3.4 2.3V.7h3.2v1.6M1.6 2.3v8.2h6.8V2.3M4 4.6v3.8M6 4.6v3.8" fill="none" stroke="#5b86d8" stroke-width=".9"/></svg></div>
<div class="act" style="left:1448px;top:559.5px">删除</div>
<div class="hl" style="left:1297.4px;top:641px;width:210px"></div>
<div class="tb" style="left:1325px;top:612.5px"><svg width="13" height="9" viewBox="0 0 13 9"><path d="M.6 4.5C2.2 1.8 4.2.7 6.5.7s4.3 1.1 5.9 3.8C10.8 7.2 8.8 8.3 6.5 8.3S2.2 7.2.6 4.5z" fill="none" stroke="#5b86d8" stroke-width=".9"/><circle cx="6.5" cy="4.5" r="1.9" fill="none" stroke="#5b86d8" stroke-width=".9"/></svg></div>
<div class="act" style="left:1342px;top:608.5px">查看</div>
<div class="tb" style="left:1379px;top:611.5px"><svg width="10" height="11" viewBox="0 0 10 11"><path d="M1 10l.6-3L7 1.3l1.8 1.6L3.4 8.7z" fill="none" stroke="#5b86d8" stroke-width=".9"/><path d="M4.8 10.5h4.6" stroke="#5b86d8" stroke-width=".9"/></svg></div>
<div class="act" style="left:1395.5px;top:608.5px">修改</div>
<div class="tb" style="left:1432px;top:611.5px"><svg width="10" height="11" viewBox="0 0 10 11"><path d="M.3 2.3h9.4M3.4 2.3V.7h3.2v1.6M1.6 2.3v8.2h6.8V2.3M4 4.6v3.8M6 4.6v3.8" fill="none" stroke="#5b86d8" stroke-width=".9"/></svg></div>
<div class="act" style="left:1448px;top:608.5px">删除</div>
<div class="hl" style="left:1297.4px;top:690px;width:210px"></div>
<div class="tb" style="left:1325px;top:661.5px"><svg width="13" height="9" viewBox="0 0 13 9"><path d="M.6 4.5C2.2 1.8 4.2.7 6.5.7s4.3 1.1 5.9 3.8C10.8 7.2 8.8 8.3 6.5 8.3S2.2 7.2.6 4.5z" fill="none" stroke="#5b86d8" stroke-width=".9"/><circle cx="6.5" cy="4.5" r="1.9" fill="none" stroke="#5b86d8" stroke-width=".9"/></svg></div>
<div class="act" style="left:1342px;top:657.5px">查看</div>
<div class="tb" style="left:1379px;top:660.5px"><svg width="10" height="11" viewBox="0 0 10 11"><path d="M1 10l.6-3L7 1.3l1.8 1.6L3.4 8.7z" fill="none" stroke="#5b86d8" stroke-width=".9"/><path d="M4.8 10.5h4.6" stroke="#5b86d8" stroke-width=".9"/></svg></div>
<div class="act" style="left:1395.5px;top:657.5px">修改</div>
<div class="tb" style="left:1432px;top:660.5px"><svg width="10" height="11" viewBox="0 0 10 11"><path d="M.3 2.3h9.4M3.4 2.3V.7h3.2v1.6M1.6 2.3v8.2h6.8V2.3M4 4.6v3.8M6 4.6v3.8" fill="none" stroke="#5b86d8" stroke-width=".9"/></svg></div>
<div class="act" style="left:1448px;top:657.5px">删除</div>
<div class="abs" style="left:1297.4px;top:692px;width:210px;height:48px;background:#f5f7fa"></div>
<div class="hl" style="left:1297.4px;top:739px;width:210px"></div>
<div class="tb" style="left:1325px;top:710.5px"><svg width="13" height="9" viewBox="0 0 13 9"><path d="M.6 4.5C2.2 1.8 4.2.7 6.5.7s4.3 1.1 5.9 3.8C10.8 7.2 8.8 8.3 6.5 8.3S2.2 7.2.6 4.5z" fill="none" stroke="#5b86d8" stroke-width=".9"/><circle cx="6.5" cy="4.5" r="1.9" fill="none" stroke="#5b86d8" stroke-width=".9"/></svg></div>
<div class="act" style="left:1342px;top:706.5px">查看</div>
<div class="tb" style="left:1379px;top:709.5px"><svg width="10" height="11" viewBox="0 0 10 11"><path d="M1 10l.6-3L7 1.3l1.8 1.6L3.4 8.7z" fill="none" stroke="#5b86d8" stroke-width=".9"/><path d="M4.8 10.5h4.6" stroke="#5b86d8" stroke-width=".9"/></svg></div>
<div class="act" style="left:1395.5px;top:706.5px">修改</div>
<div class="tb" style="left:1432px;top:709.5px"><svg width="10" height="11" viewBox="0 0 10 11"><path d="M.3 2.3h9.4M3.4 2.3V.7h3.2v1.6M1.6 2.3v8.2h6.8V2.3M4 4.6v3.8M6 4.6v3.8" fill="none" stroke="#5b86d8" stroke-width=".9"/></svg></div>
<div class="act" style="left:1448px;top:706.5px">删除</div>
<div class="hl" style="left:1297.4px;top:788px;width:210px"></div>
<div class="tb" style="left:1325px;top:759.5px"><svg width="13" height="9" viewBox="0 0 13 9"><path d="M.6 4.5C2.2 1.8 4.2.7 6.5.7s4.3 1.1 5.9 3.8C10.8 7.2 8.8 8.3 6.5 8.3S2.2 7.2.6 4.5z" fill="none" stroke="#5b86d8" stroke-width=".9"/><circle cx="6.5" cy="4.5" r="1.9" fill="none" stroke="#5b86d8" stroke-width=".9"/></svg></div>
<div class="act" style="left:1342px;top:755.5px">查看</div>
<div class="tb" style="left:1379px;top:758.5px"><svg width="10" height="11" viewBox="0 0 10 11"><path d="M1 10l.6-3L7 1.3l1.8 1.6L3.4 8.7z" fill="none" stroke="#5b86d8" stroke-width=".9"/><path d="M4.8 10.5h4.6" stroke="#5b86d8" stroke-width=".9"/></svg></div>
<div class="act" style="left:1395.5px;top:755.5px">修改</div>
<div class="tb" style="left:1432px;top:758.5px"><svg width="10" height="11" viewBox="0 0 10 11"><path d="M.3 2.3h9.4M3.4 2.3V.7h3.2v1.6M1.6 2.3v8.2h6.8V2.3M4 4.6v3.8M6 4.6v3.8" fill="none" stroke="#5b86d8" stroke-width=".9"/></svg></div>
<div class="act" style="left:1448px;top:755.5px">删除</div>
<!--/TABLE-->
</div>
</body></html>
